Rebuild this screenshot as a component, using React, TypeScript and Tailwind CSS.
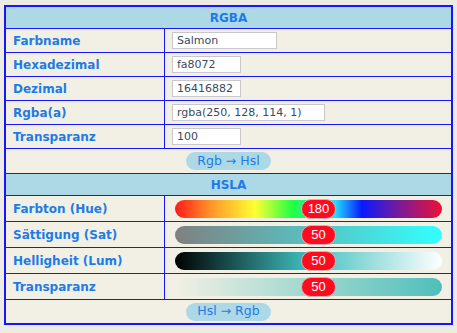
import React from 'react';

const font = { fontFamily: '"DejaVu Sans", Verdana, sans-serif' };

const rgbRows = [
  { label: 'Farbname', value: 'Salmon', w: 'w-[105px]' },
  { label: 'Hexadezimal', value: 'fa8072', w: 'w-[69px]' },
  { label: 'Dezimal', value: '16416882', w: 'w-[69px]' },
  { label: 'Rgba(a)', value: 'rgba(250, 128, 114, 1)', w: 'w-[153px]' },
  { label: 'Transparanz', value: '100', w: 'w-[69px]' },
];

const hslRows = [
  {
    label: 'Farbton (Hue)',
    value: '180',
    track:
      'bg-[linear-gradient(to_right,#ff1a1a_0%,#ff9a2a_14%,#ffff33_30%,#22ff44_44%,#22ddff_60%,#0a1aff_70%,#7a1a99_84%,#ee1034_100%)]',
  },
  {
    label: 'Sättigung (Sat)',
    value: '50',
    track: 'bg-[linear-gradient(to_right,#808080,#33ffff)]',
  },
  {
    label: 'Helligheit (Lum)',
    value: '50',
    track: 'bg-[linear-gradient(to_right,#000000,#40bfbf_50%,#ffffff)]',
  },
  {
    label: 'Transparanz',
    value: '50',
    track: 'bg-[linear-gradient(to_right,rgba(79,191,187,0),rgba(79,191,187,1))]',
  },
];

function Header({ title }: { title: string }) {
  return (
    <div className="h-[22px] bg-[#add8e6] border-b border-[#1515ff] flex items-center justify-center text-[12px] font-bold text-[#1d7be8]">
      {title}
    </div>
  );
}

function ConvertButton({ text }: { text: string }) {
  return (
    <div className="flex items-center justify-center">
      <span className="h-[18px] w-[85px] rounded-full bg-[#add8e6] text-[#1d7be8] text-[12.5px] flex items-center justify-center">
        {text}
      </span>
    </div>
  );
}

export default function App() {
  return (
    <div className="min-h-[333px] w-[457px] bg-[#ecece5] pt-[5px] px-[4px]" style={font}>
      <div className="border-2 border-[#1515ff] bg-[#f2f0e4]">
        <Header title="RGBA" />
        {rgbRows.map((r) => (
          <div key={r.label} className="h-[24px] flex border-b border-[#1515ff]">
            <div className="w-[159px] border-r border-[#1515ff] pl-[7px] flex items-center text-[12px] font-bold text-[#1d7be8]">
              {r.label}
            </div>
            <div className="flex-1 pl-[7px] flex items-center">
              <input
                readOnly
                value={r.value}
                className={`${r.w} h-[17px] border border-[#c8c8c8] bg-white px-[4px] text-[11px] text-[#3a4a5a] outline-none`}
                style={font}
              />
            </div>
          </div>
        ))}
        <div className="h-[25px] flex items-center justify-center border-b border-[#1515ff]">
          <ConvertButton text="Rgb → Hsl" />
        </div>
        <Header title="HSLA" />
        {hslRows.map((r) => (
          <div key={r.label} className="h-[26px] flex border-b border-[#1515ff]">
            <div className="w-[159px] border-r border-[#1515ff] pl-[7px] flex items-center text-[12px] font-bold text-[#1d7be8]">
              {r.label}
            </div>
            <div className="flex-1 pl-[10px] pr-[9px] flex items-center">
              <div className={`relative h-[18px] w-full rounded-full ${r.track}`}>
                <div
                  className="absolute left-[126px] top-[-1px] h-[20px] w-[35px] rounded-full bg-[#ff0a1e] border border-[#d8b0b0] flex items-center justify-center text-white text-[13px]"
                  style={{ fontFamily: '"Liberation Sans", Arial, sans-serif' }}
                >
                  {r.value}
                </div>
              </div>
            </div>
          </div>
        ))}
        <div className="h-[23px] flex items-center justify-center">
          <ConvertButton text="Hsl → Rgb" />
        </div>
      </div>
    </div>
  );
}
